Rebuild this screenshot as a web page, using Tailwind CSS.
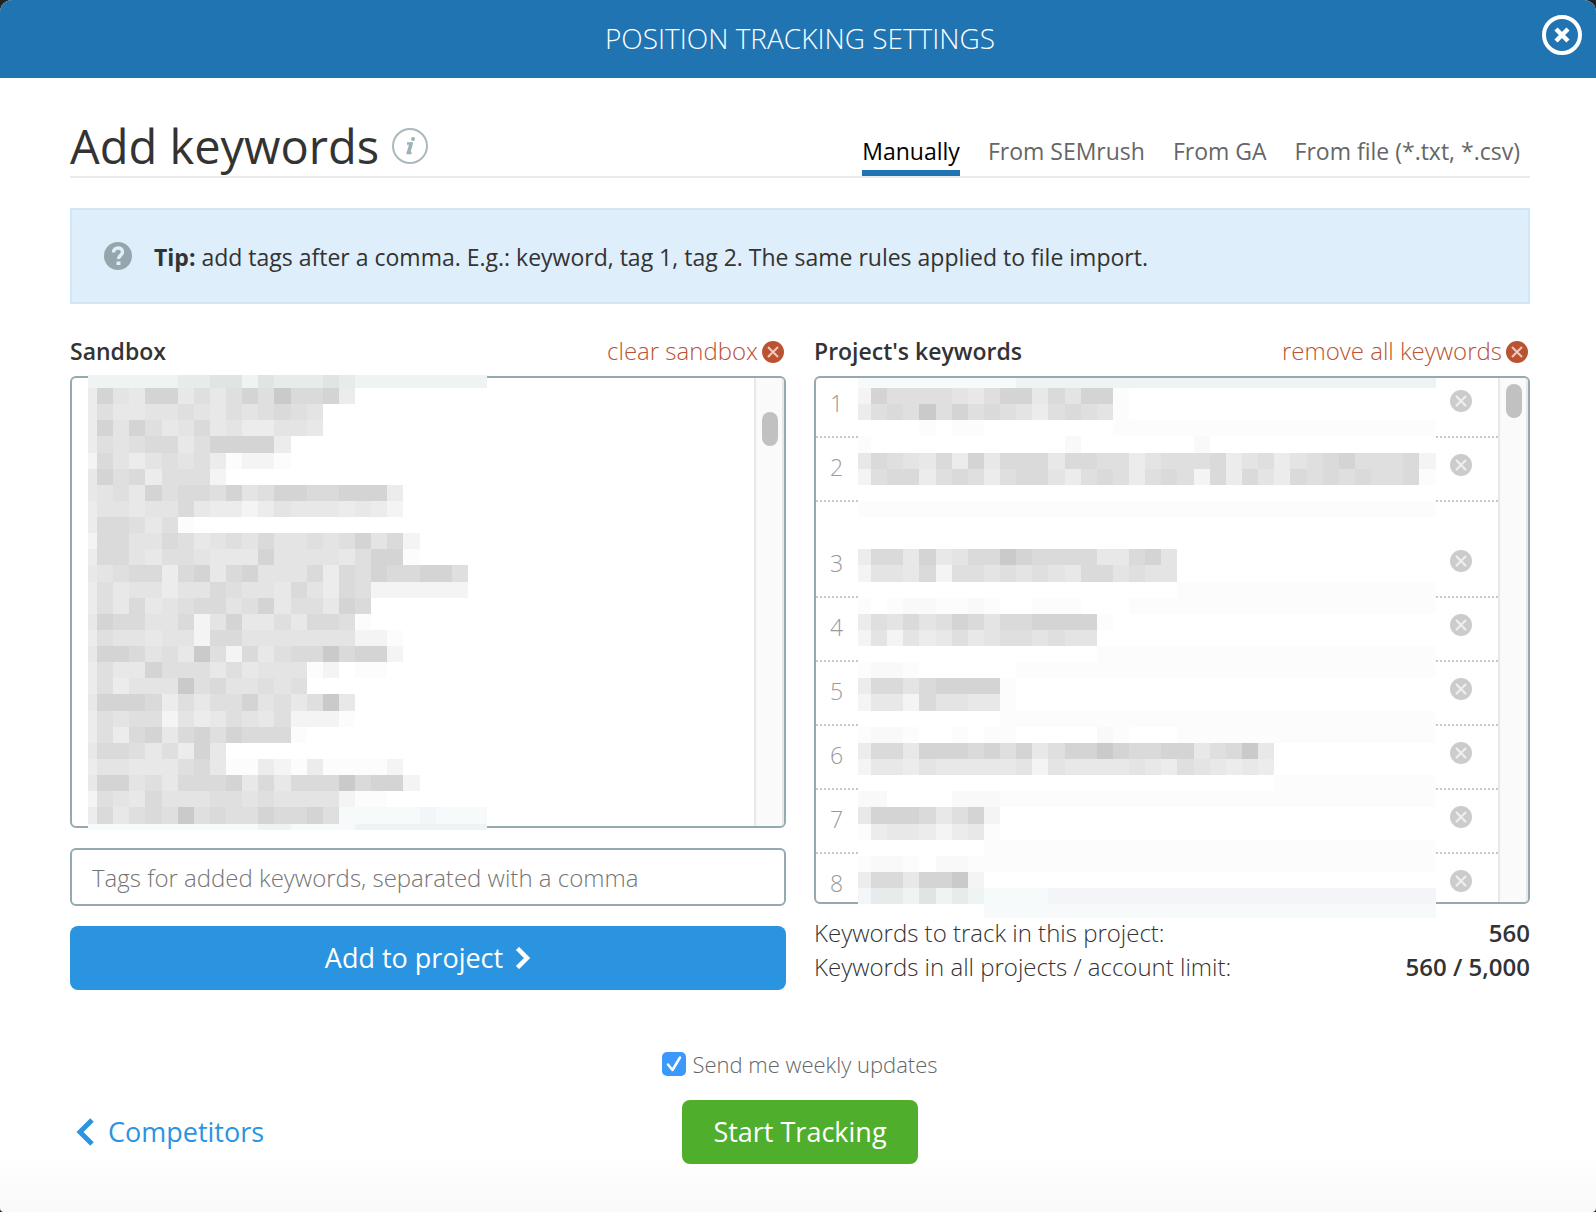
<!doctype html>

<html lang="en">
  <head>
    <meta charset="UTF-8" />
    <meta name="viewport" content="width=device-width, initial-scale=1.0" />
    <title>Position Tracking Settings</title>
    <script src="https://cdn.jsdelivr.net/npm/@tailwindcss/browser@4"></script>
  </head>
  <body class="bg-[#222222] font-['Open_Sans','Noto_Sans',sans-serif] text-[#333333]">
    <svg class="hidden">
      <symbol id="remove" viewBox="0 0 22 22">
        <circle cx="11" cy="11" r="11" fill="currentColor" />
        <path d="M6 6l10 10M16 6L6 16" stroke="#fff" stroke-opacity=".7" stroke-width="2" fill="none" />
      </symbol>
    </svg>

    <div class="flex min-h-screen flex-col overflow-hidden rounded-t-xl rounded-b-sm bg-linear-to-b from-white from-95% to-[#f9f9f9]">
      <header class="relative flex h-[78px] items-center justify-center bg-[#2174b2] pb-0.5 pl-1">
        <h2 class="text-[28px] font-light text-white">POSITION TRACKING SETTINGS</h2>
        <button class="absolute top-[15px] right-[14px] text-white" aria-label="Close">
          <svg class="size-10" viewBox="0 0 40 40" fill="none" stroke="currentColor">
            <circle cx="20" cy="20" r="18" stroke-width="4" />
            <path d="M14 14l12 12M26 14L14 26" stroke-width="4.500" />
          </svg>
        </button>
      </header>

      <main class="flex flex-col pt-10 pr-[66px] pl-[70px]">
        <div class="flex items-end justify-between border-b-2 border-[#ebebeb]">
          <div class="flex items-center gap-[13px] pb-0.5">
            <h1 class="text-[47px] leading-[56px]">Add keywords</h1>
            <svg class="size-9" viewBox="0 0 36 36" fill="none">
              <circle cx="18" cy="18" r="17" stroke="#a9b9be" stroke-width="2" />
              <circle cx="21" cy="11" r="2" fill="#9fb0b6" />
              <path d="M15 15.500h4.500l-3 9.500M14.500 25h5" stroke="#9fb0b6" stroke-width="2.500" />
              <path d="M19 16l-2.500 8.500" stroke="#9fb0b6" stroke-width="3.500" />
            </svg>
          </div>
          <nav class="flex gap-7 pr-[10px] text-[23px] leading-[34px] text-[#666666]">
            <a href="#" class="border-b-6 border-[#2174b2] pb-0.5 text-black">Manually</a>
            <a href="#">From SEMrush</a>
            <a href="#">From GA</a>
            <a href="#">From file (*.txt, *.csv)</a>
          </nav>
        </div>

        <div class="mt-[30px] flex h-24 items-center gap-[22px] border-2 border-[#d0e6f6] bg-[#deeefb] px-8">
          <svg class="size-7" viewBox="0 0 28 28" fill="none">
            <circle cx="14" cy="14" r="14" fill="#95a7ac" />
            <path d="M9.500 10.500c0-6 9-6 9-.5 0 3.500-4 3.200-4 7" stroke="#deeefb" stroke-width="3.400" />
            <path d="M12.500 19.500h4v3.500h-4z" fill="#deeefb" />
          </svg>
          <p class="pt-0.5 text-[23px] leading-[34px]"><b>Tip:</b> add tags after a comma. E.g.: keyword, tag 1, tag 2. The same rules applied to file import.</p>
        </div>

        <div class="mt-[30px] grid grid-cols-2 gap-7">
          <section class="flex flex-col">
            <div class="flex h-[42px] items-start justify-between text-[23px] leading-[34px]">
              <label for="sandbox" class="font-semibold">Sandbox</label>
              <button class="flex items-center gap-1 pr-0.5 text-[24px] font-light text-[#bb5333]">
                clear sandbox
                <svg class="mt-0.5 size-[22px]"><use href="#remove" /></svg>
              </button>
            </div>
            <div class="relative flex h-[452px] rounded-md border-2 border-[#94a9b0]">
              <textarea id="sandbox" class="flex-1 resize-none rounded-md bg-white outline-none"></textarea>
              <div class="w-[30px] rounded-r-sm border-x-2 border-[#e8e8e8] bg-[#fafafa] pt-[34px] pl-1.5">
                <div class="h-[34px] w-4 rounded-lg bg-[#c1c1c1]"></div>
              </div>
              <svg id="sandboxText" class="absolute -top-[3px] left-4 h-[455px] w-[399px]" shape-rendering="crispEdges"></svg>
            </div>
            <input
              type="text"
              aria-label="Tags"
              class="mt-5 h-[58px] w-full rounded-md border-2 border-[#94a9b0] bg-white px-5 text-[24px] font-light outline-none placeholder:text-[#757575]"
              placeholder="Tags for added keywords, separated with a comma"
            />
            <button class="mt-5 flex h-16 items-center justify-center gap-3 rounded-lg bg-[#2b94e1] text-[27px] text-white">
              Add to project
              <svg class="h-[22px] w-4" viewBox="0 0 16 22" fill="none" stroke="currentColor" stroke-width="4.500">
                <path d="M2.500 1.500L12 11l-9.500 9.500" />
              </svg>
            </button>
          </section>

          <section class="flex flex-col">
            <div class="flex h-[42px] items-start justify-between text-[23px] leading-[34px]">
              <h3 class="font-semibold">Project's keywords</h3>
              <button class="flex items-center gap-1 pr-0.5 text-[24px] font-light text-[#bb5333]">
                remove all keywords
                <svg class="mt-0.5 size-[22px]"><use href="#remove" /></svg>
              </button>
            </div>
            <div class="relative flex h-[528px] rounded-md border-2 border-[#94a9b0] bg-white">
              <ol id="keywords" class="flex-1 overflow-hidden text-[23px] font-light text-[#999999]"></ol>
              <div class="w-[30px] rounded-r-sm border-x-2 border-[#e8e8e8] bg-[#fafafa] pt-1.5 pl-1.5">
                <div class="h-[34px] w-4 rounded-lg bg-[#c1c1c1]"></div>
              </div>
              <svg id="keywordText" class="absolute top-0 left-[42px] h-[540px] w-[578px]" shape-rendering="crispEdges"></svg>
            </div>
            <dl class="mt-3 grid grid-cols-[1fr_auto] text-[24px] leading-[34px]">
              <dt class="font-light">Keywords to track in this project:</dt>
              <dd class="text-right font-semibold">560</dd>
              <dt class="font-light">Keywords in all projects / account limit:</dt>
              <dd class="text-right font-semibold">560 / 5,000</dd>
            </dl>
          </section>
        </div>
      </main>

      <footer class="mt-[58px] grid grid-cols-[1fr_auto_1fr] items-center gap-y-5 pr-[66px] pb-12 pl-[70px]">
        <label class="col-start-2 flex items-center justify-center gap-1.5 text-[22px] leading-8 font-light text-[#666666]">
          <span class="relative flex">
            <input type="checkbox" checked class="size-6 appearance-none rounded-[5px] bg-[#3b99fc]" />
            <svg class="pointer-events-none absolute inset-0 size-6" viewBox="0 0 24 24" fill="none" stroke="#fff" stroke-width="2.500">
              <path d="M6 12.500l4.500 5.500L18 5.500" stroke-linecap="round" stroke-linejoin="round" />
            </svg>
          </span>
          Send me weekly updates
        </label>
        <a href="#" class="col-start-1 row-start-2 flex items-center gap-[14px] pl-1.5 text-[27px] text-[#2b94e1]">
          <svg class="h-7 w-[18px]" viewBox="0 0 18 28" fill="none" stroke="currentColor" stroke-width="5">
            <path d="M16 2L4 14l12 12" />
          </svg>
          Competitors
        </a>
        <button class="col-start-2 row-start-2 h-16 w-[236px] justify-self-center rounded-lg bg-[#4fae2b] text-[27px] text-white">Start Tracking</button>
      </footer>
    </div>

    <script>
      // one character per cell, darker grey for a higher digit
      const shades = {
        0: "#f9f9f9",
        1: "#fcfcfc",
        2: "#f4f4f4",
        3: "#ececec",
        4: "#e8e8e8",
        5: "#e4e4e4",
        6: "#dfdfdf",
        7: "#dadada",
        8: "#d4d4d4",
        9: "#cacaca",
        a: "#eef3f4",
        b: "#e6ebec",
        c: "#dfe5e5",
        d: "#f7fafa",
        e: "#f3f5f8",
      };

      const sandboxRows = [
        "aaaaaabbccacbbbcbaaaaaaaaa",
        "38548846468697783",
        "364455654656765",
        "385864574533554",
        "3656774688883",
        "2753565631221",
        "486736662",
        "45648677685688778883",
        "35545574332354443432",
        "3776461",
        "277557645657556568572",
        "377546654448555546881",
        "456773784785557376877886",
        "364553557655475376222222",
        "364745677568466487",
        "487755725844647761",
        "36554552775555555221",
        "48875649627467797882",
        "3644866646455512.11",
        "36355596755656",
        "48887364668564694",
        "36566253465462221",
        "36378478687771",
        "477646384",
        "35544467411321311112",
        "488564777847477797882",
        "2654755566565555211",
        "3746769676687786dddddedddd",
        "dddddddddddaaddddaaaaaaaaa",
      ];

      const keywordRows = [
        "ddddddddddaaaaaaaaaaaaaaaaaaaaaaaaaa",
        "28666654688475881",
        "36769686765367651",
        "....1.11........11111111111111111111",
        "1............0.......0..............",
        "476547384777477663566673563567866672",
        "267736763677536763676273753767676671",
        "",
        "111111111111111111111111111111111111",
        "",
        "",
        "37748457798777744785",
        "25547266565654775655",
        "....................1111111111111111",
        "1.1001101..111...1111111111111111111",
        "3657568757788881",
        "252534645665655",
        "...............111111111111111111111",
        "1001......11111111111111111111111111",
        "3775788881",
        "2442755441",
        ".........111111111111111111111111111",
        "1001..1.11.....01...1111111111111111",
        "37748887868468898778846794",
        "24435444445254444543654343",
        "..........................1111111111",
        "00....000111111111111111111111111111",
        "488874682",
        "134432341",
        "........1111111111111111111111111111",
        "1001.0011111111111111111111111111111",
        "37748892",
        "ebbacabaddddeeeeeeeeeeeeeeeeeeeeeeee",
        "........dddddddddddddddddddddddddddd",
      ];

      function drawCells(id, rows, firstWidth, firstHeight, cell) {
        const svg = document.getElementById(id);
        let html = '<rect width="100%" height="100%" fill="#fff"/>';
        rows.forEach((row, r) => {
          const y = r ? Math.round(firstHeight + (r - 1) * cell) : 0;
          const bottom = Math.round(firstHeight + r * cell);
          [...row].forEach((key, c) => {
            if (!shades[key]) return;
            const x = c ? Math.round(firstWidth + (c - 1) * cell) : 0;
            const right = Math.round(firstWidth + c * cell);
            html += `<rect x="${x}" y="${y}" width="${right - x}" height="${bottom - y}" fill="${shades[key]}"/>`;
          });
        });
        svg.innerHTML = html;
      }

      const list = document.getElementById("keywords");
      for (let i = 1; i <= 8; i++) {
        const height = i === 1 ? "h-[60px]" : i === 3 ? "h-24" : "h-16";
        list.innerHTML += `
          <li class="flex ${height} items-end justify-between border-b-2 border-dotted border-[#c8c8c8] pr-[26px] pl-[14px]">
            <span class="pb-4 leading-[34px]">${i}</span>
            <button class="pb-6 text-[#cccccc]" aria-label="Remove keyword ${i}"><svg class="size-[22px]"><use href="#remove" /></svg></button>
          </li>`;
      }

      drawCells("sandboxText", sandboxRows, 9, 13, 16.13);
      drawCells("keywordText", keywordRows, 13, 10, 16.13);
    </script>
  </body>
</html>
